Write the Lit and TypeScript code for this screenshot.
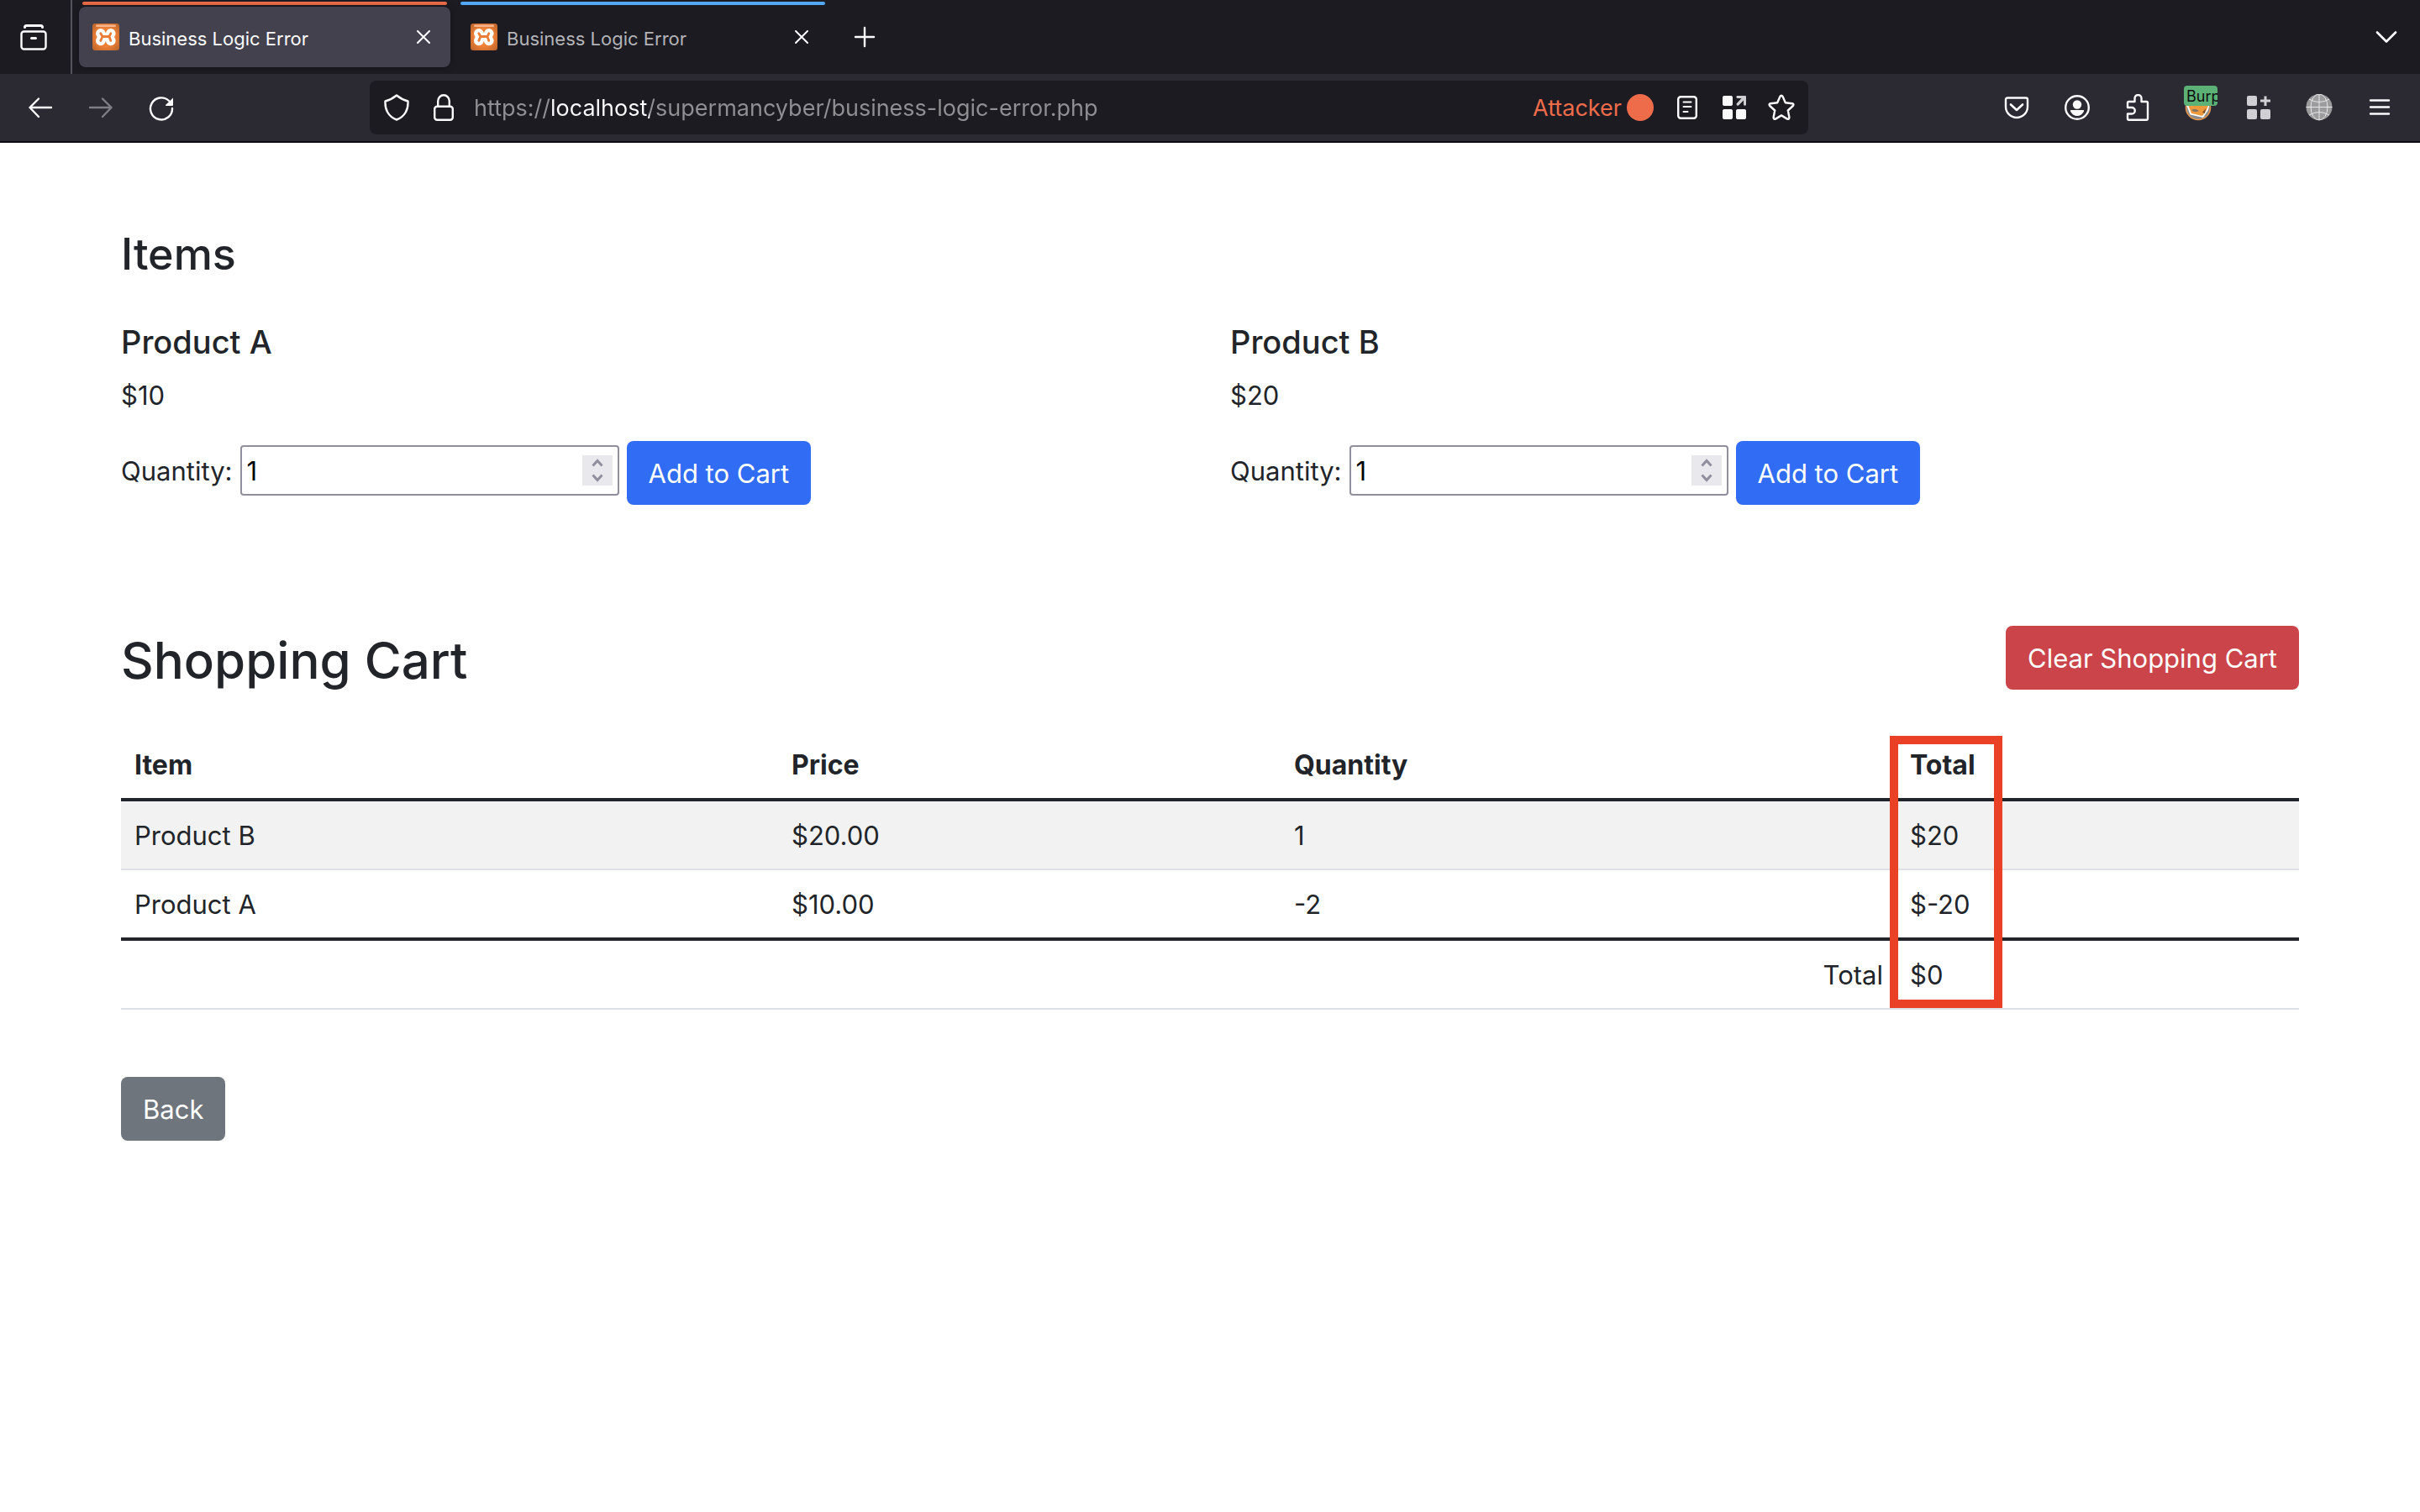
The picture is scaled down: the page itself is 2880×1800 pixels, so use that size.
import { LitElement, html, css, svg } from "lit";
import { customElement, property, state } from "lit/decorators.js";

const ui = css`Inter, "Liberation Sans", sans-serif`;

const line = (body: unknown) => html`<svg class="icon" width="32" height="32" viewBox="0 0 32 32" fill="none"
  stroke="currentColor" stroke-width="2.4" stroke-linecap="round" stroke-linejoin="round" aria-hidden="true">${body}</svg>`;

const icons = {
  archive: line(svg`<path stroke-width="3" d="M5.5 4.5Q5.5 2.5 7.500 2.500H24.500Q26.500 2.500 26.500 4.500"/><rect x="1.500" y="9.500" width="29" height="21" rx="3"/><path stroke-width="3" d="M13.500 17.500H18.500"/>`),
  back: line(svg`<path d="M29 16H3.500M14 5.500L3.500 16L14 27"/>`),
  forward: line(svg`<path d="M3 16H28.500M18 5.500L28.500 16L18 27"/>`),
  reload: line(svg`<path d="M29 17A13 13 0 1 1 25 8"/><path fill="currentColor" stroke="none" d="M30 4.500V13Q30 14 29 14H21.500Q20.500 13.500 21.200 12.700Z"/>`),
  shield: line(svg`<path d="M16 1.500Q22 6.500 29.500 8.500C30 18 26 27 16 30.500C6 27 2 18 2.500 8.500Q10 6.500 16 1.500Z"/>`),
  lock: line(svg`<rect x="5.200" y="14.700" width="21.600" height="16" rx="3"/><path d="M9.200 14V8.500a6.800 7.200 0 0 1 13.600 0V14"/>`),
  reader: line(svg`<rect x="5.200" y="3.200" width="21.600" height="25.600" rx="3"/><path stroke-width="2" d="M11.500 9.500H20.500M11.500 15H20.500M11.500 21H16.500"/>`),
  star: line(svg`<path d="M14.500 2.800Q16 .6 17.500 2.800L20.800 10.200L29 11.200Q31.500 12 29.800 14L23.800 19.500L25.400 27.800Q25.400 30.200 23 29.600L16 25.400L9 29.600Q6.600 30.200 6.600 27.800L8.200 19.500L2.200 14Q.5 12 3 11.200L11.200 10.200Z"/>`),
  pocket: line(svg`<path d="M5 4.500H27Q29 4.500 29 6.500V15A13 13 0 0 1 3 15V6.500Q3 4.500 5 4.500Z"/><path stroke-width="2.600" d="M9 12.500L16 19L23 12.500"/>`),
  account: line(svg`<circle cx="16" cy="16" r="13.800"/><circle cx="16" cy="12.500" r="5.200" fill="currentColor" stroke="none"/><path fill="currentColor" stroke="none" d="M8.500 19H23.500Q24.500 19 24 20.500Q21 26 16 26Q11 26 8 20.500Q7.500 19 8.500 19Z"/>`),
  puzzle: line(svg`<path d="M4 16V10.500Q4 9 5.500 9H12.500V5a4 4 0 0 1 8 0V9H26.500Q28 9 28 10.500V29Q28 30.700 26.500 30.700H5.500Q4 30.700 4 29V23.500H9a3.700 3.700 0 0 0 0-7.500H4Z"/>`),
  menu: line(svg`<path d="M5 7.500H27M5 15.500H27M5 23.500H27"/>`),
  chevron: line(svg`<path stroke-width="2.600" d="M5 10.500L16 21.500L27 10.500"/>`),
  plus: line(svg`<path stroke-width="2.400" d="M16 5V27M5 16H27"/>`),
  close: html`<svg class="icon" width="16" height="16" viewBox="0 0 16 16" fill="none" stroke="currentColor" stroke-width="2" stroke-linecap="round" aria-hidden="true"><path d="M1 1L15 15M15 1L1 15"/></svg>`,
  containers: html`<svg class="icon" width="32" height="32" viewBox="0 0 32 32" fill="currentColor" aria-hidden="true">
    <rect x="2" y="2" width="12" height="12" rx="2"/><rect x="2" y="18" width="12" height="12" rx="2"/><rect x="18" y="18" width="12" height="12" rx="2"/>
    <path opacity=".8" d="M19 2H29Q30 2 30 3V13Q29 14.500 27 13V7.500L21 13.500Q18.500 14.500 18.500 11.500L24.500 5H19.500Q17.500 4 19 2Z"/></svg>`,
  addons: html`<svg class="icon" width="32" height="32" viewBox="0 0 32 32" fill="#d0d0d4" aria-hidden="true">
    <rect x="2" y="2" width="12" height="12" rx="2"/><rect x="2" y="18" width="12" height="12" rx="2"/><rect x="18" y="18" width="12" height="12" rx="2"/>
    <path d="M22.500 2.500h3v4h4.500v3h-4.500v4.500h-3v-4.500H18v-3h4.500Z"/></svg>`,
  globe: html`<svg class="icon" width="32" height="32" viewBox="0 0 32 32" fill="none" stroke="#e8e8ea" stroke-width="1" aria-hidden="true">
    <circle cx="16" cy="15.500" r="15.500" fill="#9c9c9f" stroke="none"/>
    <path d="M16 0V31M.5 15.500H31.500M4 6Q16 13 28 6M4 25Q16 18 28 25"/><ellipse cx="16" cy="15.500" rx="10" ry="15.500"/></svg>`,
  fox: html`<svg class="icon" width="32" height="32" viewBox="0 0 32 32" aria-hidden="true">
    <circle cx="16" cy="16" r="14.500" fill="#8b8b8b" stroke="#e8954a" stroke-width="1.600"/>
    <path d="M2 13L6.500 24.500L22 28L28 19L29.500 12Z" fill="#fff"/>
    <path d="M4 13L8 23L21 26L26 19L28.500 12Z" fill="#ee9a3c"/>
    <path d="M8 19Q12 16 17 20Q12 23 8 19Z" fill="#8a7660"/><path d="M21 22L25 17L24 23Z" fill="#7a4f26"/></svg>`,
  xampp: html`<svg class="favicon" width="32" height="32" viewBox="0 0 32 32" aria-hidden="true">
    <defs><radialGradient id="g" cx=".5" cy=".5" r=".7"><stop offset=".5" stop-color="#ef8037"/><stop offset="1" stop-color="#b5622a"/></radialGradient></defs>
    <rect width="32" height="32" rx="3" fill="url(#g)"/><rect x="4" y="1.500" width="24" height="2.500" rx="1.200" fill="#f6b58c"/>
    <g fill="#fff"><circle cx="9.800" cy="11.800" r="5.800"/><circle cx="21.800" cy="11.800" r="5.800"/><circle cx="9.800" cy="20.400" r="5.800"/><circle cx="21.800" cy="20.400" r="5.800"/><rect x="9" y="10.800" width="14" height="10.600"/></g>
    <path d="M9.800 11.800L12 15.500L9.800 20.400M13 15.500H19.500M21.800 11.800L20 15.500L21.800 20.400" fill="none" stroke="#ea7c35" stroke-width="2.800" stroke-linecap="round" stroke-linejoin="round"/></svg>`,
};

@customElement("browser-tab")
class BrowserTab extends LitElement {
  @property() label = "";
  @property({ type: Boolean, reflect: true }) active = false;
  @property() tone = "work";

  static styles = css`
    :host { display: block; flex: 0 1 442px; padding-top: 2px; min-width: 0; }
    .line { height: 4px; margin: 0 4px 2px; border-radius: 2px; background: #53a8f5; }
    .line.attacker { background: #ee6c4a; }
    .body { display: flex; align-items: center; gap: 11px; height: 72px; padding: 0 24px 0 16px; border-radius: 8px; color: #b3b3b7; }
    :host([active]) .body { background: #42414d; color: #fbfbfe; box-shadow: 0 0 6px rgba(0, 0, 0, .35); }
    .favicon { display: block; flex: none; }
    .label { flex: 1; font-size: 22px; line-height: 28px; padding-top: 4px; white-space: nowrap; overflow: hidden; }
    button { display: flex; padding: 0; border: 0; background: none; color: #fbfbfe; }
  `;

  render() {
    return html`<div class="line ${this.tone}"></div>
      <div class="body">${icons.xampp}<span class="label">${this.label}</span>
        <button aria-label="Close tab">${icons.close}</button></div>`;
  }
}

@customElement("browser-chrome")
class BrowserChrome extends LitElement {
  static styles = css`
    :host { display: block; font-family: ${ui}; color: #fbfbfe; }
    button { display: flex; align-items: center; justify-content: center; padding: 0; border: 0; background: none; color: inherit; font: inherit; }
    .icon { display: block; flex: none; }
    .tabs { display: flex; height: 88px; background: #1c1b22; }
    .view { width: 86px; padding-right: 4px; border-right: 2px solid #55545e; }
    .strip { display: flex; flex: 1; gap: 8px; padding-left: 8px; min-width: 0; }
    .new { width: 70px; }
    .list { width: 80px; }
    .bar { display: flex; align-items: center; height: 80px; padding: 0 12px; background: #2b2a33; border-bottom: 2px solid #0c0a10; }
    .nav, .tools { display: flex; }
    .nav button, .tools button { width: 72px; height: 72px; }
    .off { opacity: .4; }
    .url { flex: 1; display: flex; align-items: center; gap: 24px; height: 64px; margin: 0 212px; padding: 0 16px; border-radius: 8px; background: #1c1b22; min-width: 0; }
    .address { flex: 1; min-width: 0; border: 0; padding: 2px 0 0; margin-left: -4px; outline: 0; font: 27px/40px ${ui}; color: transparent;
      background: linear-gradient(90deg, #8f8f94 90px, #fbfbfe 90px, #fbfbfe 209px, #8f8f94 209px); -webkit-background-clip: text; background-clip: text; }
    .container { display: flex; align-items: center; gap: 6px; font-size: 27px; line-height: 40px; color: #ee6c4a; }
    .name { padding-top: 2px; }
    .dot { width: 32px; height: 32px; border-radius: 50%; background: #ee6c4a; }
    .burp { position: relative; }
    .badge { position: absolute; box-sizing: border-box; left: 19px; top: 10px; width: 40px; height: 24px; padding-left: 3px; border-radius: 4px; overflow: hidden;
      background: #5cb176; color: #0c0c0d; font-size: 18px; line-height: 26px; text-align: left; }
  `;

  render() {
    return html`
      <div class="tabs">
        <button class="view" aria-label="Recent browsing">${icons.archive}</button>
        <div class="strip">
          <browser-tab label="Business Logic Error" tone="attacker" active></browser-tab>
          <browser-tab label="Business Logic Error"></browser-tab>
          <button class="new" aria-label="New tab">${icons.plus}</button>
        </div>
        <button class="list" aria-label="List all tabs">${icons.chevron}</button>
      </div>
      <div class="bar">
        <div class="nav">
          <button aria-label="Back">${icons.back}</button>
          <button class="off" aria-label="Forward">${icons.forward}</button>
          <button aria-label="Reload">${icons.reload}</button>
        </div>
        <div class="url">
          <button aria-label="Tracking protection">${icons.shield}</button>
          <button aria-label="Site information">${icons.lock}</button>
          <input class="address" aria-label="Address" .value=${"https://localhost/supermancyber/business-logic-error.php"} />
          <span class="container"><span class="name">Attacker</span><span class="dot"></span></span>
          <button aria-label="Reader view">${icons.reader}</button>
          <button aria-label="Open in container">${icons.containers}</button>
          <button aria-label="Bookmark">${icons.star}</button>
        </div>
        <div class="tools">
          <button aria-label="Save to Pocket">${icons.pocket}</button>
          <button aria-label="Account">${icons.account}</button>
          <button aria-label="Extensions">${icons.puzzle}</button>
          <button class="burp" aria-label="Proxy">${icons.fox}<span class="badge">Burp</span></button>
          <button aria-label="Containers">${icons.addons}</button>
          <button aria-label="Network">${icons.globe}</button>
          <button aria-label="Menu">${icons.menu}</button>
        </div>
      </div>`;
  }
}

const buttonStyles = css`
  .btn { box-sizing: border-box; height: 76px; padding: 13px 24px 11px; border: 2px solid transparent; border-radius: 8px; color: #fff; font: inherit; white-space: nowrap; }
  .primary { background: #316cf4; }
  .danger { background: #cb444a; }
  .secondary { background: #6e757c; }
`;

@customElement("product-card")
class ProductCard extends LitElement {
  @property() name = "";
  @property({ type: Number }) price = 0;
  @state() private quantity = 1;

  static styles = [buttonStyles, css`
    :host { display: block; }
    h5 { margin: 0 0 16px; font-size: 38px; line-height: 48px; font-weight: 500; }
    p { margin: 0 0 30px; }
    form { display: flex; align-items: flex-start; gap: 9px; }
    .field { display: flex; align-items: center; gap: 9px; padding-top: 5px; }
    label { padding-top: 2px; }
    .number { box-sizing: border-box; display: flex; align-items: center; width: 451px; height: 60px; padding: 0 6px; border: 2px solid #8f8f9d; border-radius: 4px; }
    input { flex: 1; min-width: 0; padding: 2px 0 0; border: 0; outline: 0; background: none; color: #000; font: inherit; appearance: textfield; }
    input::-webkit-inner-spin-button { appearance: none; margin: 0; }
    .steps { display: grid; background: #e9e9ed; color: #8f8f9d; }
    .steps button { display: flex; align-items: center; justify-content: center; width: 36px; height: 18px; padding: 0; border: 0; background: none; color: inherit; }
  `];

  private step(by: number) { this.quantity += by; }

  render() {
    return html`<h5>${this.name}</h5>
      <p>$${this.price}</p>
      <form @submit=${(e: Event) => e.preventDefault()}>
        <div class="field">
          <label for="q">Quantity:</label>
          <div class="number">
            <input id="q" type="number" .value=${String(this.quantity)} />
            <span class="steps">
              <button type="button" aria-label="Increase" @click=${() => this.step(1)}><svg width="14" height="10" viewBox="0 0 14 10" fill="none" stroke="currentColor" stroke-width="3"><path d="M1.500 8.500L7 2.500L12.500 8.500"/></svg></button>
              <button type="button" aria-label="Decrease" @click=${() => this.step(-1)}><svg width="14" height="10" viewBox="0 0 14 10" fill="none" stroke="currentColor" stroke-width="3"><path d="M1.500 1.500L7 7.500L12.500 1.500"/></svg></button>
            </span>
          </div>
        </div>
        <button class="btn primary">Add to Cart</button>
      </form>`;
  }
}

interface CartLine { item: string; price: number; quantity: number; }

@customElement("app-root")
class AppRoot extends LitElement {
  @state() private cart: CartLine[] = [
    { item: "Product B", price: 20, quantity: 1 },
    { item: "Product A", price: 10, quantity: -2 },
  ];

  static styles = [buttonStyles, css`
    :host { display: block; min-height: 100vh; background: #fff; color: #212529; font: 31px/48px ${ui}; }
    main { padding: 98px 5%; }
    h2, h3 { margin: 0; font-weight: 500; }
    h3 { font-size: 52px; line-height: 70px; margin-bottom: 45px; }
    h2 { font-size: 60px; line-height: 82px; }
    .products { display: grid; grid-template-columns: 1fr 1fr; gap: 48px; margin-bottom: 144px; }
    .heading { display: flex; justify-content: space-between; align-items: flex-start; margin-bottom: 43px; }
    .cart { position: relative; margin-bottom: 80px; }
    table { width: 100%; table-layout: fixed; border-spacing: 0; }
    .c1 { width: 782px; } .c2 { width: 598px; } .c3 { width: 733px; }
    th, td { padding: 17px 16px 15px; text-align: left; }
    th { font-size: 32px; font-weight: 700; border-bottom: 4px solid #212529; }
    td { border-bottom: 2px solid #dee2e6; }
    tbody tr:nth-child(odd) td { background: #f2f2f2; }
    tbody tr:last-child td { border-bottom: 4px solid #212529; }
    td.sum { text-align: right; }
    .mark { position: absolute; box-sizing: border-box; left: 2105px; top: 6px; width: 134px; height: 324px; border: 10px solid #ea4025; pointer-events: none; }
  `];

  render() {
    const total = this.cart.reduce((sum, l) => sum + l.price * l.quantity, 0);
    return html`
      <browser-chrome></browser-chrome>
      <main>
        <h3>Items</h3>
        <div class="products">
          <product-card name="Product A" price="10"></product-card>
          <product-card name="Product B" price="20"></product-card>
        </div>
        <div class="heading">
          <h2>Shopping Cart</h2>
          <button class="btn danger" @click=${() => (this.cart = [])}>Clear Shopping Cart</button>
        </div>
        <div class="cart">
          <table>
            <colgroup><col class="c1" /><col class="c2" /><col class="c3" /><col /></colgroup>
            <thead><tr><th>Item</th><th>Price</th><th>Quantity</th><th>Total</th></tr></thead>
            <tbody>${this.cart.map((l) => html`<tr><td>${l.item}</td><td>$${l.price.toFixed(2)}</td><td>${l.quantity}</td><td>$${l.price * l.quantity}</td></tr>`)}</tbody>
            <tfoot><tr><td class="sum" colspan="3">Total</td><td>$${total}</td></tr></tfoot>
          </table>
          <div class="mark"></div>
        </div>
        <button class="btn secondary">Back</button>
      </main>`;
  }
}
